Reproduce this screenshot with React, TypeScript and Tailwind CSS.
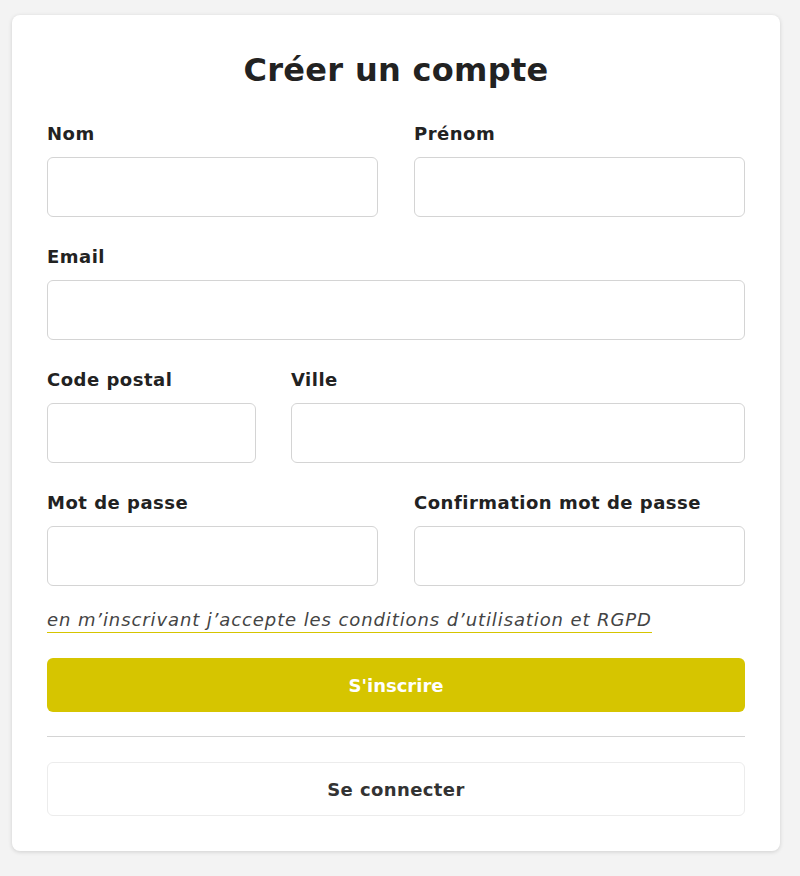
import React from "react";

const Field = ({ label, type = "text" }: any) => (
  <div className="flex flex-col">
    <label className="text-[18px] font-bold leading-[22px] tracking-[0.5px] text-[#222] mb-[12px]">{label}</label>
    <input
      type={type}
      className="h-[60px] w-full rounded-[6px] border border-[#d4d4d4] bg-white px-4 outline-none"
    />
  </div>
);

export default function App() {
  return (
    <div
      className="min-h-[876px] bg-[#f3f3f3] px-[12px] pt-[15px]"
      style={{ fontFamily: "'DejaVu Sans', 'Liberation Sans', sans-serif" }}
    >
      <div className="w-[768px] rounded-[8px] bg-white px-[35px] pt-[33px] pb-[35px] shadow-[0_1px_4px_rgba(0,0,0,0.15)]">
        <h1 className="text-center text-[32px] font-bold leading-[44px] tracking-[0.3px] text-[#222]">Créer un compte</h1>

        <form className="mt-[31px] flex flex-col gap-[29px]">
          <div className="grid grid-cols-2 gap-x-[36px]">
            <Field label="Nom" />
            <Field label="Prénom" />
          </div>
          <Field label="Email" type="email" />
          <div className="grid grid-cols-[209px_1fr] gap-x-[35px]">
            <Field label="Code postal" />
            <Field label="Ville" />
          </div>
          <div className="grid grid-cols-2 gap-x-[36px]">
            <Field label="Mot de passe" type="password" />
            <Field label="Confirmation mot de passe" type="password" />
          </div>
        </form>

        <a
          href="#"
          className="mt-[22px] inline-block text-[18px] font-normal italic leading-[24px] tracking-[0.9px] text-[#444] border-b border-[#d6c500]"
        >
          en m’inscrivant j’accepte les conditions d’utilisation et RGPD
        </a>

        <button className="mt-[25px] flex h-[54px] w-full items-center justify-center rounded-[6px] bg-[#d6c500] text-[18px] font-bold text-white">
          S'inscrire
        </button>

        <div className="mt-[24px] h-px bg-[#d4d4d4]" />

        <button className="mt-[25px] flex h-[54px] w-full items-center justify-center rounded-[6px] border border-[#ececec] bg-white text-[18px] font-bold tracking-[0.4px] text-[#333]">
          Se connecter
        </button>
      </div>
    </div>
  );
}
